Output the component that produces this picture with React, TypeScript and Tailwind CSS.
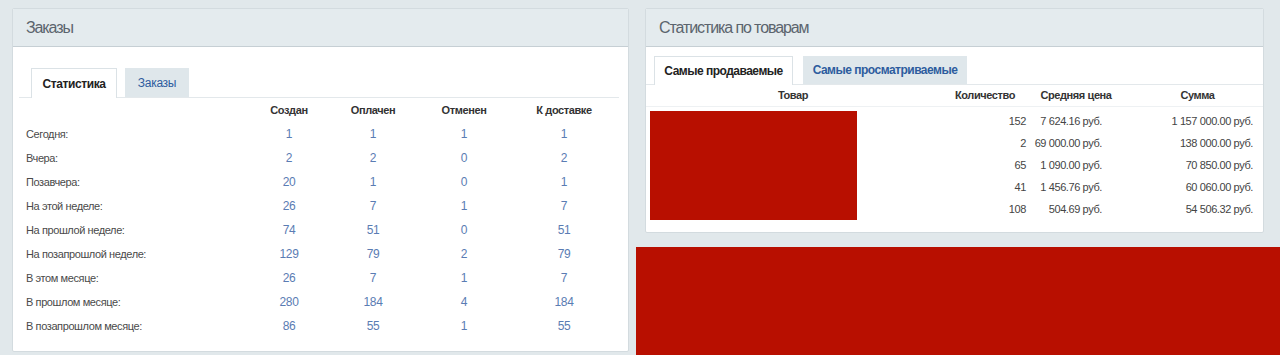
const orderRows: [string, number, number, number, number][] = [
  ['Сегодня:', 1, 1, 1, 1],
  ['Вчера:', 2, 2, 0, 2],
  ['Позавчера:', 20, 1, 0, 1],
  ['На этой неделе:', 26, 7, 1, 7],
  ['На прошлой неделе:', 74, 51, 0, 51],
  ['На позапрошлой неделе:', 129, 79, 2, 79],
  ['В этом месяце:', 26, 7, 1, 7],
  ['В прошлом месяце:', 280, 184, 4, 184],
  ['В позапрошлом месяце:', 86, 55, 1, 55],
];

const productRows: [number, string, string][] = [
  [152, '7 624.16 руб.', '1 157 000.00 руб.'],
  [2, '69 000.00 руб.', '138 000.00 руб.'],
  [65, '1 090.00 руб.', '70 850.00 руб.'],
  [41, '1 456.76 руб.', '60 060.00 руб.'],
  [108, '504.69 руб.', '54 506.32 руб.'],
];

function PanelHeader({ title }: { title: string }) {
  return (
    <div className="h-[38px] flex items-center px-[13px] bg-[#e4ebee] border-b border-[#c6cfd4]">
      <span className="text-[16px] tracking-[-1.1px] text-[#5b646d] whitespace-nowrap">{title}</span>
    </div>
  );
}

export default function App() {
  return (
    <div className="h-[355px] overflow-hidden bg-[#e1e8eb] font-['Liberation_Sans',Arial,sans-serif] whitespace-nowrap flex items-start pl-[12px] pt-[8px] gap-[7px]">
      {/* Orders */}
      <div className="w-[617px] h-[344px] bg-white rounded-[2px] border border-[#d3dbdf] overflow-hidden">
        <PanelHeader title="Заказы" />
        <div className="pt-[21px] pl-[6px] pr-[9px]">
          <div className="flex gap-[8px] pl-[12px] border-b border-[#e3e8eb] h-[30px] items-end">
            <div className="w-[86px] h-[30px] -mb-px bg-white border border-b-0 border-[#dbe2e6] flex items-center justify-center text-[12px] tracking-[-0.4px] font-bold text-[#222]">
              Статистика
            </div>
            <div className="w-[64px] h-[29px] bg-[#dfe7eb] flex items-center justify-center text-[12px] tracking-[-0.3px] text-[#2d5c9e]">
              Заказы
            </div>
          </div>
          <div className="grid grid-cols-[228px_84px_84px_98px_102px] text-[11px] tracking-[-0.4px]">
            <div className="h-[24px]" />
            {['Создан', 'Оплачен', 'Отменен', 'К доставке'].map((h) => (
              <div key={h} className="h-[24px] flex items-center justify-center font-bold text-[#333]">
                {h}
              </div>
            ))}
            {orderRows.map(([label, ...vals]) => (
              <div key={label} className="contents">
                <div className="h-[24px] flex items-center pl-[7px] text-[#4a4a4a]">{label}</div>
                {vals.map((v, i) => (
                  <div key={i} className="h-[24px] flex items-center justify-center text-[12px] text-[#5a7cb3]">
                    {v}
                  </div>
                ))}
              </div>
            ))}
          </div>
        </div>
      </div>

      {/* Right column */}
      <div className="w-[644px] flex flex-col gap-[14px]">
        <div className="ml-[9px] mr-[16px] h-[225px] bg-white rounded-[2px] border border-[#d3dbdf] overflow-hidden">
          <PanelHeader title="Статистика по товарам" />
          <div className="pt-[9px]">
            <div className="flex gap-[10px] pl-[8px] border-b border-[#e3e8eb] h-[29px] items-end">
              <div className="w-[139px] h-[29px] -mb-px bg-white border border-b-0 border-[#dbe2e6] flex items-center justify-center text-[12px] tracking-[-0.5px] font-bold text-[#222]">
                Самые продаваемые
              </div>
              <div className="w-[164px] h-[28px] bg-[#dfe7eb] flex items-center justify-center text-[12px] tracking-[-0.5px] font-bold text-[#2d5c9e]">
                Самые просматриваемые
              </div>
            </div>
            <div className="grid grid-cols-[294px_90px_92px_1fr] text-[11px] tracking-[-0.4px]">
              <div className="h-[22px] flex items-center justify-center font-bold text-[#333] border-b border-[#eef1f3]">Товар</div>
              <div className="h-[22px] flex items-center justify-center font-bold text-[#333] border-b border-[#eef1f3]">Количество</div>
              <div className="h-[22px] flex items-center justify-center font-bold text-[#333] border-b border-[#eef1f3]">Средняя цена</div>
              <div className="h-[22px] flex items-center justify-center pl-[10px] font-bold text-[#333] border-b border-[#eef1f3]">Сумма</div>
              <div className="row-span-5 pt-[4px] pl-[4px]">
                <div className="w-[207px] h-[109px] bg-[#b80f00]" />
              </div>
              {productRows.map(([qty, price, sum], i) => (
                <div key={i} className="contents">
                  <div className={`h-[22px] flex items-center justify-end pr-[4px] text-[#444] ${i === 0 ? 'mt-[3px]' : ''}`}>{qty}</div>
                  <div className={`h-[22px] flex items-center justify-end pr-[20px] text-[#444] ${i === 0 ? 'mt-[3px]' : ''}`}>{price}</div>
                  <div className={`h-[22px] flex items-center justify-end pr-[10px] text-[#444] ${i === 0 ? 'mt-[3px]' : ''}`}>{sum}</div>
                </div>
              ))}
            </div>
          </div>
        </div>
        <div className="h-[120px] bg-[#b80f00]" />
      </div>
    </div>
  );
}
